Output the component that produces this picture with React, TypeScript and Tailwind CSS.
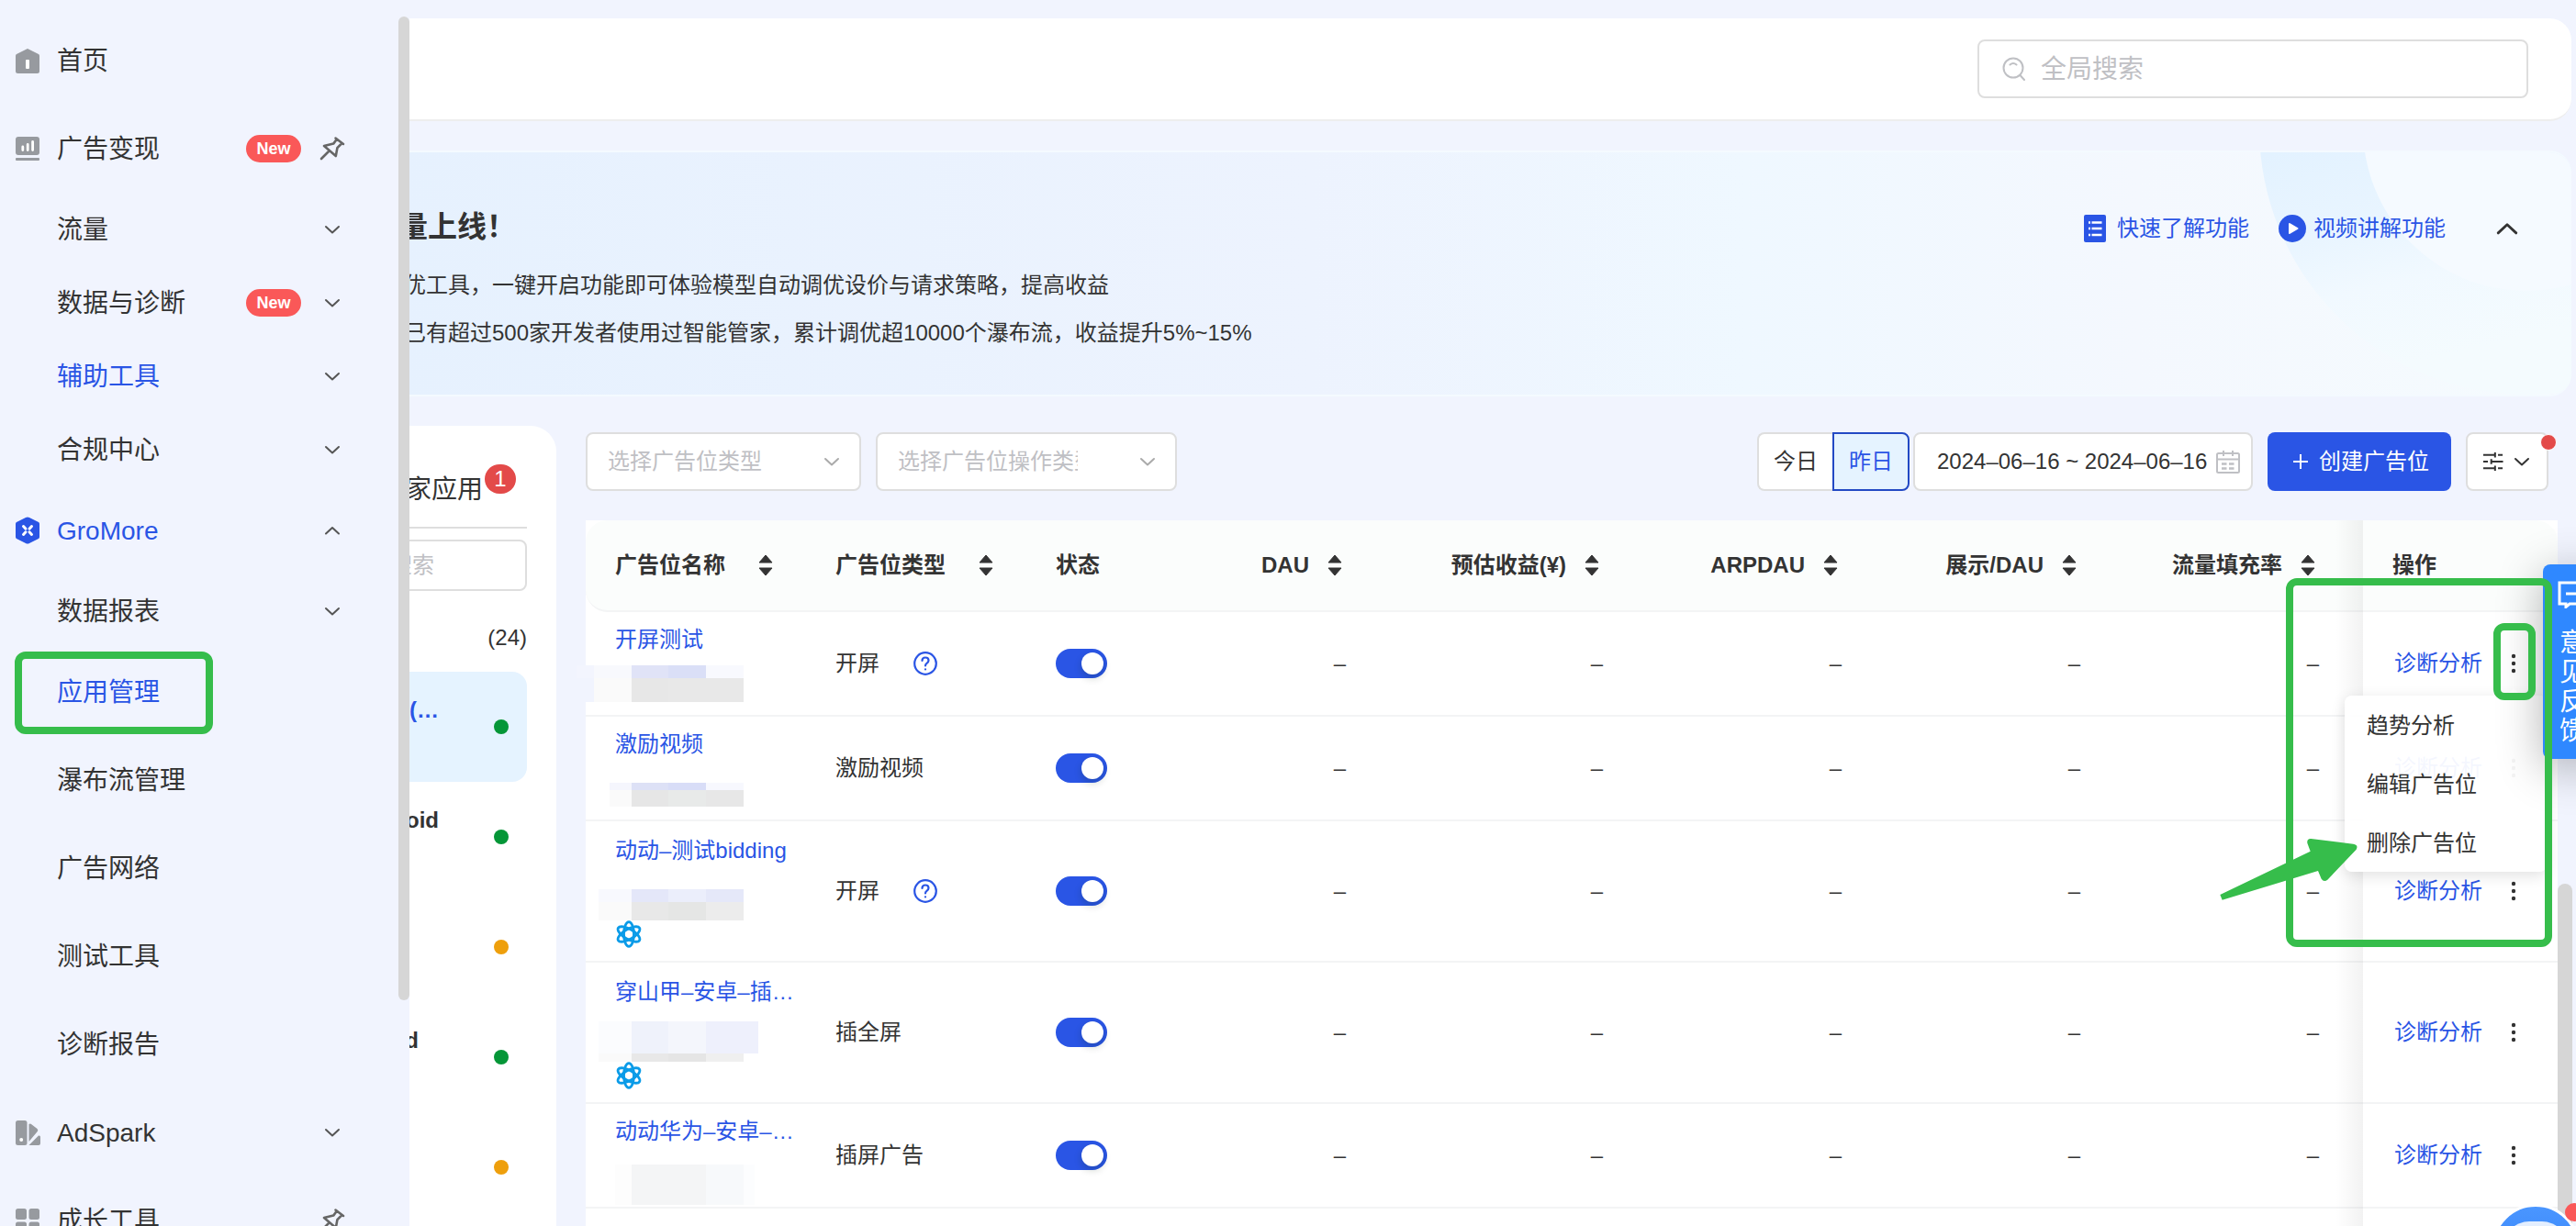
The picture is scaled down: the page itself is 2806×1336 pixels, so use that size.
import React from "react";

const FONT = "font-['Liberation_Sans','Noto_Sans_CJK_SC',sans-serif]";

function Chevron({ up, className = "size-5 text-[#555]", strokeWidth = 2 }: { up?: boolean; className?: string; strokeWidth?: number }) {
  return (
    <svg viewBox="0 0 20 20" className={className + " shrink-0"} fill="none" stroke="currentColor" strokeWidth={strokeWidth} strokeLinecap="round" strokeLinejoin="round">
      <path d={up ? "M3 13.5 L10 7 L17 13.5" : "M3 7 L10 13.5 L17 7"} />
    </svg>
  );
}

function Pin() {
  return (
    <svg viewBox="0 0 28 28" className="h-7 w-7 text-[#666]" fill="none" stroke="currentColor" strokeWidth="2.6" strokeLinejoin="round" strokeLinecap="round">
      <path d="M17.5 2.500 L26 9 M18.800 3.800 L15.200 8.600 L5 11 L17.800 22 L19.400 13.200 L24.500 8 M10.500 16.500 L2 25" />
    </svg>
  );
}

function HomeIcon() {
  return (
    <svg viewBox="0 0 26 28" className="h-7 w-[26px]">
      <path d="M13 1 L25 7 Q26 7.600 26 9 V25.500 Q26 28 23.500 28 H2.500 Q0 28 0 25.500 V9 Q0 7.600 1 7 Z" fill="#979a9f" />
      <rect x="11" y="13" width="4" height="10" rx="1" fill="#fff" />
    </svg>
  );
}

function MonetizeIcon() {
  return (
    <svg viewBox="0 0 26 26" className="h-[26px] w-[26px]">
      <rect width="26" height="20" rx="3" fill="#979a9f" />
      <rect y="23" width="26" height="3" rx="1" fill="#979a9f" />
      <path d="M7.800 11 V14.500 M13.200 8.500 V14.500 M18.600 5.500 V14.500" stroke="#fff" strokeWidth="2.800" strokeLinecap="round" />
    </svg>
  );
}

function GroMoreIcon() {
  return (
    <svg viewBox="0 0 26 30" className="h-[30px] w-[26px]">
      <path d="M11 1 Q13 0 15 1 L25 6 Q26 6.600 26 8 V22 Q26 23.400 25 24 L15 29 Q13 30 11 29 L1 24 Q0 23.400 0 22 V8 Q0 6.600 1 6 Z" fill="#2a55e5" />
      <path d="M8.500 10.500 L11 13.200 M17.500 10.500 L15 13.200 M8.500 19.500 L11 16.800 M17.500 19.500 L15 16.800" stroke="#fff" strokeWidth="3" strokeLinecap="round" />
    </svg>
  );
}

function AdSparkIcon() {
  return (
    <svg viewBox="0 0 27 27" className="h-[27px] w-[27px]" fill="#979a9f">
      <rect width="12.500" height="27" rx="2.500" />
      <circle cx="6.200" cy="21" r="2" fill="#fff" />
      <path d="M14.500 4 Q16 3 17 4 L23.500 9 Q25 10.500 23.800 12 L14.500 23 Z" />
      <path d="M14.500 27 L25 16.500 Q27 16 27 18 V25 Q27 27 25 27 Z" />
    </svg>
  );
}

function GridIcon() {
  return (
    <svg viewBox="0 0 26 26" className="h-[26px] w-[26px]" fill="#979a9f">
      <rect width="12" height="12" rx="2.500" />
      <rect x="14.500" width="11.500" height="12" rx="2.500" />
      <rect y="14.500" width="12" height="11.500" rx="2.500" />
      <rect x="14.500" y="14.500" width="11.500" height="11.500" rx="2.500" />
    </svg>
  );
}

type NavItem = {
  label: string;
  icon?: React.ReactNode;
  isNew?: boolean;
  trail?: "down" | "up" | "pin";
  active?: boolean;
  short?: boolean;
  boxed?: boolean;
};

const nav: NavItem[] = [
  { label: "首页", icon: <HomeIcon /> },
  { label: "广告变现", icon: <MonetizeIcon />, isNew: true, trail: "pin" },
  { label: "流量", trail: "down", short: true },
  { label: "数据与诊断", isNew: true, trail: "down", short: true },
  { label: "辅助工具", trail: "down", active: true, short: true },
  { label: "合规中心", trail: "down", short: true },
  { label: "GroMore", icon: <GroMoreIcon />, trail: "up", active: true },
  { label: "数据报表", trail: "down", short: true },
  { label: "应用管理", active: true, boxed: true },
  { label: "瀑布流管理" },
  { label: "广告网络" },
  { label: "测试工具" },
  { label: "诊断报告" },
  { label: "AdSpark", icon: <AdSparkIcon />, trail: "down" },
  { label: "成长工具", icon: <GridIcon />, trail: "pin" },
];

function Sidebar() {
  return (
    <nav className="relative z-10 w-[434px] shrink-0 bg-[#f1f4fe] pt-[18px]">
      <ul>
        {nav.map((n) => (
          <li key={n.label} className="relative">
            <a href="#" className={`flex items-center pl-[17px] pr-[58px] text-[28px] ${n.short ? "h-20" : "h-24"} ${n.active ? "text-[#2a55e5]" : "text-[#333]"}`}>
              <span className="flex w-[45px] shrink-0">{n.icon}</span>
              <span className="flex-1 whitespace-nowrap pt-0.5">{n.label}</span>
              {n.isNew && (
                <span className="mr-5 flex h-[30px] w-[60px] items-center justify-center rounded-full bg-[#fa5858] text-lg font-bold text-white">New</span>
              )}
              <span className="flex w-7 justify-center">
                {n.trail === "pin" && <Pin />}
                {n.trail === "down" && <Chevron />}
                {n.trail === "up" && <Chevron up />}
              </span>
            </a>
            {n.boxed && <span className="pointer-events-none absolute left-4 top-1 h-[90px] w-[216px] rounded-xl border-8 border-[#36bd4b]" />}
          </li>
        ))}
      </ul>
      <div className="absolute left-full top-0 h-full w-3 bg-[#f1f4fe]">
        <div className="mt-[18px] h-[1072px] rounded-full bg-[#d6d6d6]" />
      </div>
    </nav>
  );
}

function SearchIcon() {
  return (
    <svg viewBox="0 0 26 26" className="h-[26px] w-[26px] shrink-0" fill="none" stroke="#bfc0c4" strokeWidth="2" strokeLinecap="round">
      <circle cx="12" cy="12" r="10.500" />
      <path d="M19.500 20 L24 25 M8.500 8.500 Q12 5.500 15.500 8.500" />
    </svg>
  );
}

function Header() {
  return (
    <header className="flex h-28 justify-end rounded-r-3xl border-b-2 border-[#eeeeee] bg-white pr-[47px] pt-[23px]">
      <label className="flex h-16 w-[600px] items-center gap-4 rounded-lg border-2 border-[#dedede] px-[25px]">
        <SearchIcon />
        <input aria-label="全局搜索" placeholder="全局搜索" className="min-w-0 flex-1 bg-transparent pt-0.5 text-[28px] outline-none placeholder:text-[#bfc0c4]" />
      </label>
    </header>
  );
}

function Banner() {
  return (
    <section className="relative mt-8 h-[268px] overflow-hidden rounded-r-3xl border-y-2 border-[#f4faff] text-[#333]">
      <div className="absolute inset-0 bg-[linear-gradient(90deg,#e6f1fe_0%,#edf3fe_42%,#eff8ff_62%,#f4f8fe_80%,#f5fbfe_100%)]" />
      <svg viewBox="0 0 360 268" className="absolute right-0 top-0 h-[268px] w-[360px]">
        <defs>
          <linearGradient id="ring" gradientUnits="userSpaceOnUse" x1="40" y1="0" x2="100" y2="250">
            <stop offset="0" stopColor="#e3f2ff" />
            <stop offset="0.400" stopColor="#e9f5ff" />
            <stop offset="0.650" stopColor="#f1f9ff" />
            <stop offset="1" stopColor="#f4fbfe" />
          </linearGradient>
        </defs>
        <circle cx="311" cy="-27" r="291" fill="url(#ring)" />
        <circle cx="311" cy="-27" r="178" fill="#f5faff" />
      </svg>
      <div className="relative flex justify-between pr-14 pt-14">
        <div>
          <h2 className="text-[32px] font-bold leading-[50px]">量上线！</h2>
          <p className="mt-[13px] pl-1.5 text-2xl leading-[52px]">优工具，一键开启功能即可体验模型自动调优设价与请求策略，提高收益</p>
          <p className="pl-1.5 text-2xl leading-[52px]">已有超过500家开发者使用过智能管家，累计调优超10000个瀑布流，收益提升5%~15%</p>
        </div>
        <div className="flex h-[54px] items-center text-2xl text-[#2a55e5]">
          <a href="#" className="flex items-center gap-3">
            <svg viewBox="0 0 24 30" className="h-[30px] w-6">
              <rect width="24" height="30" rx="2" fill="#2a55e5" />
              <path d="M5 8.500 h2 M8.500 8.500 h11 M5 15 h2 M8.500 15 h11 M5 22 h2 M8.500 22 h11" stroke="#fff" strokeWidth="2.400" />
            </svg>
            快速了解功能
          </a>
          <a href="#" className="ml-8 flex items-center gap-2">
            <svg viewBox="0 0 30 30" className="h-[30px] w-[30px]">
              <circle cx="15" cy="15" r="15" fill="#2a55e5" />
              <path d="M12 10 L20.500 15 L12 20 Z" fill="#fff" stroke="#fff" strokeWidth="2" strokeLinejoin="round" />
            </svg>
            视频讲解功能
          </a>
          <button aria-label="收起" className="ml-[53px] text-[#333]">
            <Chevron up className="size-7 text-[#333]" strokeWidth={2} />
          </button>
        </div>
      </div>
    </section>
  );
}

const apps = [
  { tail: "(…", color: "bg-[#059637]", selected: true },
  { tail: "oid", color: "bg-[#059637]" },
  { tail: "", color: "bg-[#ee9f0c]" },
  { tail: "d", color: "bg-[#059637]", shorter: true },
  { tail: "", color: "bg-[#ee9f0c]" },
];

function AppList() {
  return (
    <aside className="flex w-[172px] shrink-0 flex-col rounded-tr-[28px] bg-white pr-8 pt-10 text-[#333]">
      <div className="flex h-[72px] items-start border-b-2 border-[#dedede] pl-2">
        <span className="mt-2.5 text-[28px] leading-[40px]">家应用</span>
        <span className="ml-0.5 mt-0.5 flex h-8 w-[34px] items-center justify-center rounded-full bg-[#e34a49] text-2xl text-white">1</span>
      </div>
      <input aria-label="搜索" placeholder="搜索" className="mt-3 h-14 w-full rounded-r-lg border-2 border-[#dedede] indent-[-11px] text-2xl outline-none placeholder:text-[#bfc0c4]" />
      <div className="mt-[30px] h-[58px] text-right text-2xl leading-[42px]">(24)</div>
      <ul>
        {apps.map((a, i) => (
          <li key={i} className={`flex h-[120px] justify-between rounded-r-2xl pr-5 ${a.selected ? "bg-[#e5f3ff] text-[#2a55e5]" : ""}`}>
            <span className={`mt-6 flex h-9 justify-end text-2xl font-bold leading-9 ${a.shorter ? "w-[22px]" : "w-11"}`}>{a.tail}</span>
            <span className={`size-4 self-center rounded-full ${a.color}`} />
          </li>
        ))}
      </ul>
    </aside>
  );
}

function Picker({ label, className, textClass }: { label: string; className: string; textClass: string }) {
  return (
    <button className={`flex h-16 items-center justify-between rounded-lg border-2 border-[#dedede] bg-white pl-[22px] pr-5 text-2xl text-[#bfc0c4] ${className}`}>
      <span className={`overflow-hidden whitespace-nowrap text-left ${textClass}`}>{label}</span>
      <Chevron className="size-5 text-[#aaa]" />
    </button>
  );
}

function Toolbar() {
  return (
    <div className="flex items-center pr-2.5 text-2xl text-[#333]">
      <Picker label="选择广告位类型" className="w-[300px]" textClass="w-[200px]" />
      <Picker label="选择广告位操作类型" className="ml-4 w-[328px]" textClass="w-[196px]" />
      <div className="ml-auto flex">
        <button className="h-16 w-[82px] rounded-l-lg border-2 border-r-0 border-[#dedede] bg-white">今日</button>
        <button className="h-16 w-[84px] rounded-r-lg border-2 border-[#2349c4] bg-[#e5f3ff] text-[#2a55e5]">昨日</button>
      </div>
      <label className="ml-1 flex h-16 w-[370px] items-center rounded-lg border-2 border-[#dedede] bg-white pl-6 pr-3">
        <input aria-label="日期范围" readOnly value="2024–06–16 ~ 2024–06–16" className="w-[300px] min-w-0 bg-transparent outline-none" />
        <svg viewBox="0 0 26 26" className="ml-1 h-[26px] w-[26px] shrink-0" fill="none" stroke="#bfc0c4" strokeWidth="2">
          <rect x="1" y="4" width="24" height="21" rx="1.500" />
          <path d="M1 10.500 H25 M8 1 V7 M18 1 V7" />
          <path d="M6 15.500 h5.500 M14 15.500 h5.500 M6 20.500 h5.500 M14 20.500 h5.500" strokeWidth="2.500" />
        </svg>
      </label>
      <button className="ml-4 flex h-16 w-[200px] items-center gap-3 rounded-lg bg-[#2a55e5] pl-7 text-white">
        <svg viewBox="0 0 16 16" className="size-4" stroke="#fff" strokeWidth="2"><path d="M8 0 V16 M0 8 H16" /></svg>
        创建广告位
      </button>
      <button aria-label="筛选" className="relative ml-4 flex h-16 w-[90px] items-center gap-2.5 rounded-lg border-2 border-[#dedede] bg-white pl-[17px]">
        <svg viewBox="0 0 24 24" className="size-[22px]" stroke="#333" strokeWidth="2.200" fill="none">
          <path d="M0 4 H14 M14 1 V7 M17.500 4 H23 M0 12 H5.500 M9.500 9 V15 M9.500 12 H23.500 M0 20 H14 M14 17 V23 M17.500 20 H23" />
        </svg>
        <Chevron className="size-5 text-[#333]" />
        <span className="absolute -right-[11px] top-0 size-[18px] rounded-full border border-white bg-[#e34a49]" />
      </button>
    </div>
  );
}

function Sort() {
  return (
    <svg viewBox="0 0 16 24" className="h-6 w-4 shrink-0" fill="#333">
      <path d="M8 1 L15 9 H1 Z M8 23 L15 15 H1 Z" stroke="#333" strokeLinejoin="round" />
    </svg>
  );
}

function Atom() {
  return (
    <svg viewBox="0 0 30 30" className="h-[30px] w-[30px]" fill="none" stroke="#0a9be8" strokeWidth="2.800">
      <ellipse cx="15" cy="15" rx="5.500" ry="13.400" />
      <ellipse cx="15" cy="15" rx="5.500" ry="13.400" transform="rotate(60 15 15)" />
      <ellipse cx="15" cy="15" rx="5.500" ry="13.400" transform="rotate(120 15 15)" />
    </svg>
  );
}

type Row = {
  name: string;
  type: string;
  help?: boolean;
  atom?: boolean;
  height: string;
  cell: string;
  mosaic: React.ReactNode;
};

const rows: Row[] = [
  {
    name: "开屏测试", type: "开屏", help: true, height: "h-[114px]", cell: "pt-3",
    mosaic: (
      <div className="-ml-[42px] mt-2.5 h-10">
        <div className="flex h-3.5"><i className="w-[19px] bg-[#f3f5fe]" /><i className="w-[41px] bg-[#f8f9fd]" /><i className="w-10 bg-[#e0e3f7]" /><i className="w-[41px] bg-[#dadff7]" /><i className="w-[41px] bg-[#f8f9fe]" /></div>
        <div className="flex h-[26px]"><i className="w-[19px] bg-[#f1f4fe]" /><i className="w-[41px] bg-[#fafafa]" /><i className="w-10 bg-[#e7e7e7]" /><i className="w-[82px] bg-[#e8e8e8]" /></div>
      </div>
    ),
  },
  {
    name: "激励视频", type: "激励视频", height: "h-[114px]", cell: "pt-3",
    mosaic: (
      <div className="-ml-1.5 mt-6 h-[26px]">
        <div className="flex h-2"><i className="w-6 bg-[#f5f6fd]" /><i className="w-10 bg-[#dde1f6]" /><i className="w-[41px] bg-[#d8ddf7]" /><i className="w-[41px] bg-[#f7f8fe]" /></div>
        <div className="flex h-[18px]"><i className="w-6 bg-[#fafafa]" /><i className="w-10 bg-[#e6e6e6]" /><i className="w-[41px] bg-[#e8eae9]" /><i className="w-[41px] bg-[#e7e7e7]" /></div>
      </div>
    ),
  },
  {
    name: "动动–测试bidding", type: "开屏", help: true, atom: true, height: "h-[154px]", cell: "pt-3.5",
    mosaic: (
      <div className="-ml-[18px] mt-6 h-[34px]">
        <div className="flex h-3.5"><i className="w-9 bg-[#f8f9fe]" /><i className="w-10 bg-[#e4e7f9]" /><i className="w-[41px] bg-[#ebeefb]" /><i className="w-[41px] bg-[#e5e8f9]" /></div>
        <div className="flex h-5"><i className="w-9 bg-[#fafafa]" /><i className="w-10 bg-[#e8e8e8]" /><i className="w-[41px] bg-[#e5e6e5]" /><i className="w-[41px] bg-[#ececec]" /></div>
      </div>
    ),
  },
  {
    name: "穿山甲–安卓–插…", type: "插全屏", atom: true, height: "h-[154px]", cell: "pt-3.5",
    mosaic: (
      <div className="-ml-[18px] mt-3.5 h-11">
        <div className="flex h-[35px]"><i className="w-9 bg-[#fbfcfe]" /><i className="w-10 bg-[#eff2fb]" /><i className="w-[41px] bg-[#f4f6fc]" /><i className="w-[57px] bg-[#eef0fc]" /></div>
        <div className="flex h-[9px]"><i className="w-9 bg-[#fafafa]" /><i className="w-10 bg-[#e8e8e8]" /><i className="w-[41px] bg-[#e5e5e5]" /><i className="w-[41px] bg-[#efefef]" /></div>
      </div>
    ),
  },
  {
    name: "动动华为–安卓–…", type: "插屏广告", height: "h-[114px]", cell: "pt-3",
    mosaic: (
      <div className="mt-[18px] flex h-11"><i className="w-[18px] bg-[#fdfdfd]" /><i className="w-[81px] bg-[#f4f5f6]" /><i className="w-[41px] bg-[#f7f9fb]" /><i className="w-3 bg-[#fcfdfe]" /></div>
    ),
  },
];

const numeric = [
  { label: "DAU", pad: "pr-8" },
  { label: "预估收益(¥)", pad: "pr-8" },
  { label: "ARPDAU", pad: "pr-8" },
  { label: "展示/DAU", pad: "pr-8" },
  { label: "流量填充率", pad: "pr-12" },
];

function MoreDots() {
  return (
    <svg viewBox="0 0 8 24" className="h-6 w-2" fill="#333">
      <circle cx="4" cy="4" r="2.200" /><circle cx="4" cy="12" r="2.200" /><circle cx="4" cy="20" r="2.200" />
    </svg>
  );
}

function RowMenu() {
  return (
    <div className="absolute right-3 top-full z-20 w-[220px] rounded-lg bg-white/95 text-[#333] shadow-[0_4px_16px_rgba(0,0,0,0.12)]">
      <span className="absolute -top-2 right-7 border-x-8 border-b-8 border-x-transparent border-b-white" />
      {["趋势分析", "编辑广告位", "删除广告位"].map((t) => (
        <button key={t} className="block h-16 w-full pl-6 pt-0.5 text-left">{t}</button>
      ))}
    </div>
  );
}

function SlotTable() {
  return (
    <div className="relative mt-8 grow bg-white">
      <table className="w-full table-fixed border-separate border-spacing-0 text-2xl text-[#333]">
        <colgroup>
          <col className="w-[240px]" /><col className="w-[240px]" /><col className="w-[140px]" /><col className="w-[240px]" /><col className="w-[280px]" />
          <col className="w-[260px]" /><col className="w-[260px]" /><col className="w-[276px]" /><col className="w-[212px]" />
        </colgroup>
        <thead>
          <tr className="h-[100px] text-left">
            <th className="rounded-l-3xl border-b-2 border-[#f3f4f5] bg-[#fbfdfc] pl-8 font-bold">
              <span className="flex items-center gap-9">广告位名称<Sort /></span>
            </th>
            <th className="border-b-2 border-[#f3f4f5] bg-[#fbfdfc] pl-8 font-bold">
              <span className="flex items-center gap-9">广告位类型<Sort /></span>
            </th>
            <th className="whitespace-nowrap border-b-2 border-[#f3f4f5] bg-[#fbfdfc] pl-8 font-bold">状态</th>
            {numeric.map((n) => (
              <th key={n.label} className={`border-b-2 border-[#f3f4f5] bg-[#fbfdfc] font-bold ${n.pad}`}>
                <span className="flex items-center justify-end gap-5 pr-1">{n.label}<Sort /></span>
              </th>
            ))}
            <th className="rounded-tr-3xl border-b-2 border-[#f3f4f5] bg-[#fbfdfc] pl-8 font-bold">操作</th>
          </tr>
        </thead>
        <tbody>
          {rows.map((r, i) => (
            <tr key={r.name} className={r.height}>
              <td className={`border-b-2 border-[#f3f4f5] pl-8 align-top ${r.cell}`}>
                <a href="#" className="block h-9 whitespace-nowrap leading-9 text-[#2a55e5]">{r.name}</a>
                {r.mosaic}
                {r.atom && <Atom />}
              </td>
              <td className="border-b-2 border-[#f3f4f5] pl-8">
                <span className="flex items-center">
                  {r.type}
                  {r.help && (
                    <button aria-label="说明" className="ml-[37px]">
                      <svg viewBox="0 0 26 26" className="h-[26px] w-[26px]" fill="none" stroke="#2a55e5" strokeWidth="2.200" strokeLinecap="round">
                        <circle cx="13" cy="13" r="11.800" />
                        <path d="M9.500 10 Q9.500 6.500 13 6.500 Q16.500 6.500 16.500 9.800 Q16.500 11.500 14.500 12.800 Q13 13.800 13 15.500 M13 19.300 V19.500" />
                      </svg>
                    </button>
                  )}
                </span>
              </td>
              <td className="border-b-2 border-[#f3f4f5] pl-8">
                <label className="flex h-8 w-14 items-center rounded-full bg-[#2a55e5] pl-7">
                  <input type="checkbox" role="switch" aria-label={r.name + "状态"} defaultChecked className="size-6 appearance-none rounded-full bg-white shadow-[0_4px_8px_rgba(0,35,11,0.200)]" />
                </label>
              </td>
              {numeric.map((n) => (
                <td key={n.label} className={`border-b-2 border-[#f3f4f5] text-right ${n.pad}`}>–</td>
              ))}
              <td className="border-b-2 border-[#f3f4f5] pl-[34px]">
                <span className="relative flex h-[70px] items-center gap-[30px]">
                  <a href="#" className="text-[#2a55e5]">诊断分析</a>
                  <button aria-label="更多" className="relative">
                    <MoreDots />
                    {i === 0 && <span className="pointer-events-none absolute -left-[18px] -top-8 z-40 h-[84px] w-[46px] rounded-xl border-8 border-[#36bd4b]" />}
                  </button>
                  {i === 0 && <RowMenu />}
                </span>
              </td>
            </tr>
          ))}
        </tbody>
      </table>
      <div className="pointer-events-none absolute inset-y-0 right-[212px] w-[30px] bg-linear-to-r from-transparent to-black/5" />
      <div className="pointer-events-none absolute right-1.5 top-[63px] z-40 h-[402px] w-[290px] rounded-xl border-8 border-[#36bd4b]" />
      <svg viewBox="0 0 450 210" className="pointer-events-none absolute right-[218px] top-[346px] z-40 h-[70px] w-[150px]" fill="#36bd4b">
        <path d="M1 186 L296 44 L286 17 Q284 2 298 3 L436 20 Q454 23 446 38 L352 137 Q340 146 332 134 L321 108 L8 203 Z" />
      </svg>
    </div>
  );
}

function FeedbackTab() {
  return (
    <a href="#" className="absolute -right-7 top-[615px] z-30 flex h-[212px] w-16 flex-col items-center rounded-l-lg bg-[#2f88ff] pt-[18px] text-[28px] leading-8 text-white shadow-[0_10px_50px_rgba(0,0,0,0.300)]">
      <svg viewBox="0 0 32 30" className="h-[30px] w-8" fill="none" stroke="#fff" strokeWidth="3">
        <path d="M2 2 H30 V25 H13 L9 28.500 V25 H2 Z M9 14 H23" />
      </svg>
      <span className="mt-[22px] w-7 text-center">意见反馈</span>
    </a>
  );
}

export default function App() {
  return (
    <div className={`relative flex h-screen overflow-hidden bg-[#f1f4fe] ${FONT}`}>
      <Sidebar />
      <main className="flex min-w-0 flex-1 flex-col pt-5">
        <div className="pr-[5px]">
          <Header />
          <Banner />
        </div>
        <div className="mt-8 flex grow">
          <AppList />
          <div className="ml-8 mr-5 flex min-w-0 flex-1 flex-col pt-[7px]">
            <Toolbar />
            <SlotTable />
          </div>
        </div>
      </main>
      <div className="absolute right-1 top-[963px] h-full w-4 rounded-full bg-[#d6d6d6]" />
      <FeedbackTab />
      <button aria-label="客服" className="absolute -bottom-[72px] -right-1 z-20 flex size-24 items-start justify-center rounded-full border-[3px] border-white bg-linear-to-b from-[#4a96ff] to-[#2f7cf6] pt-4">
        <span className="h-14 w-[70px] rounded-full bg-[#e3eefe]" />
      </button>
      <span className="absolute -right-2 top-[1311px] z-30 size-5 rounded-full bg-[#fa5858]" />
    </div>
  );
}
